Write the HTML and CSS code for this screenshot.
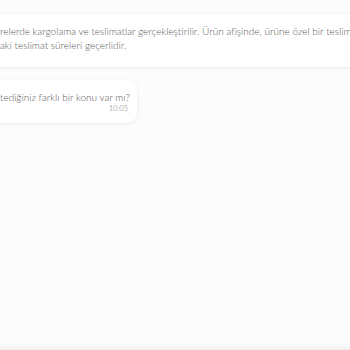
FILE: index.html
```html
<!DOCTYPE html>
<html lang="tr">
<head>
    <meta charset="UTF-8">
    <meta name="viewport" content="width=device-width, initial-scale=1.0">
    <title>Destek</title>
    <link rel="stylesheet" href="styles.css">
</head>
<body>
    <div class="page">
        <div class="chat">
            <div class="bubble bubble-wide">
                <p class="msg">relerde kargolama ve teslimatlar gerçekleştirilir. Ürün afişinde, ürüne özel bir teslim<br>aki teslimat süreleri geçerlidir.</p>
            </div>
            <div class="bubble bubble-short">
                <p class="msg">tediğiniz farklı bir konu var mı?</p>
                <span class="time">10:05</span>
            </div>
        </div>
        <div class="composer"></div>
    </div>
</body>
</html>
```

FILE: styles.css
```css
body {
    margin: 0;
    padding: 0;
    background: #fcfcfc;
    font-family: 'Lato', 'Open Sans', sans-serif;
    color: #5a5a5a;
    overflow: hidden;
}
.page {
    height: 350px;
    display: flex;
    flex-direction: column;
}
.chat {
    flex: 1;
    display: flex;
    flex-direction: column;
    align-items: flex-start;
    gap: 13px;
    padding-top: 14px;
}
.bubble {
    box-sizing: border-box;
    background: #fff;
    border-radius: 10px;
    box-shadow: 0 1px 4px rgba(0, 0, 0, 0.07);
    margin-left: -30px;
}
.bubble-wide {
    width: 420px;
    padding: 10px 0 15px 30px;
}
.bubble-short {
    width: 167px;
    padding: 10px 9px 9px 30px;
    display: flex;
    flex-direction: column;
}
.msg {
    margin: 0;
    font-size: 10px;
    line-height: 14px;
    white-space: nowrap;
    font-weight: 300;
}
.time {
    align-self: flex-end;
    font-size: 7.5px;
    color: #b5b5b5;
    line-height: 10px;
}
.composer {
    height: 7px;
    background: linear-gradient(#fcfcfc, #efefef);
}
```
